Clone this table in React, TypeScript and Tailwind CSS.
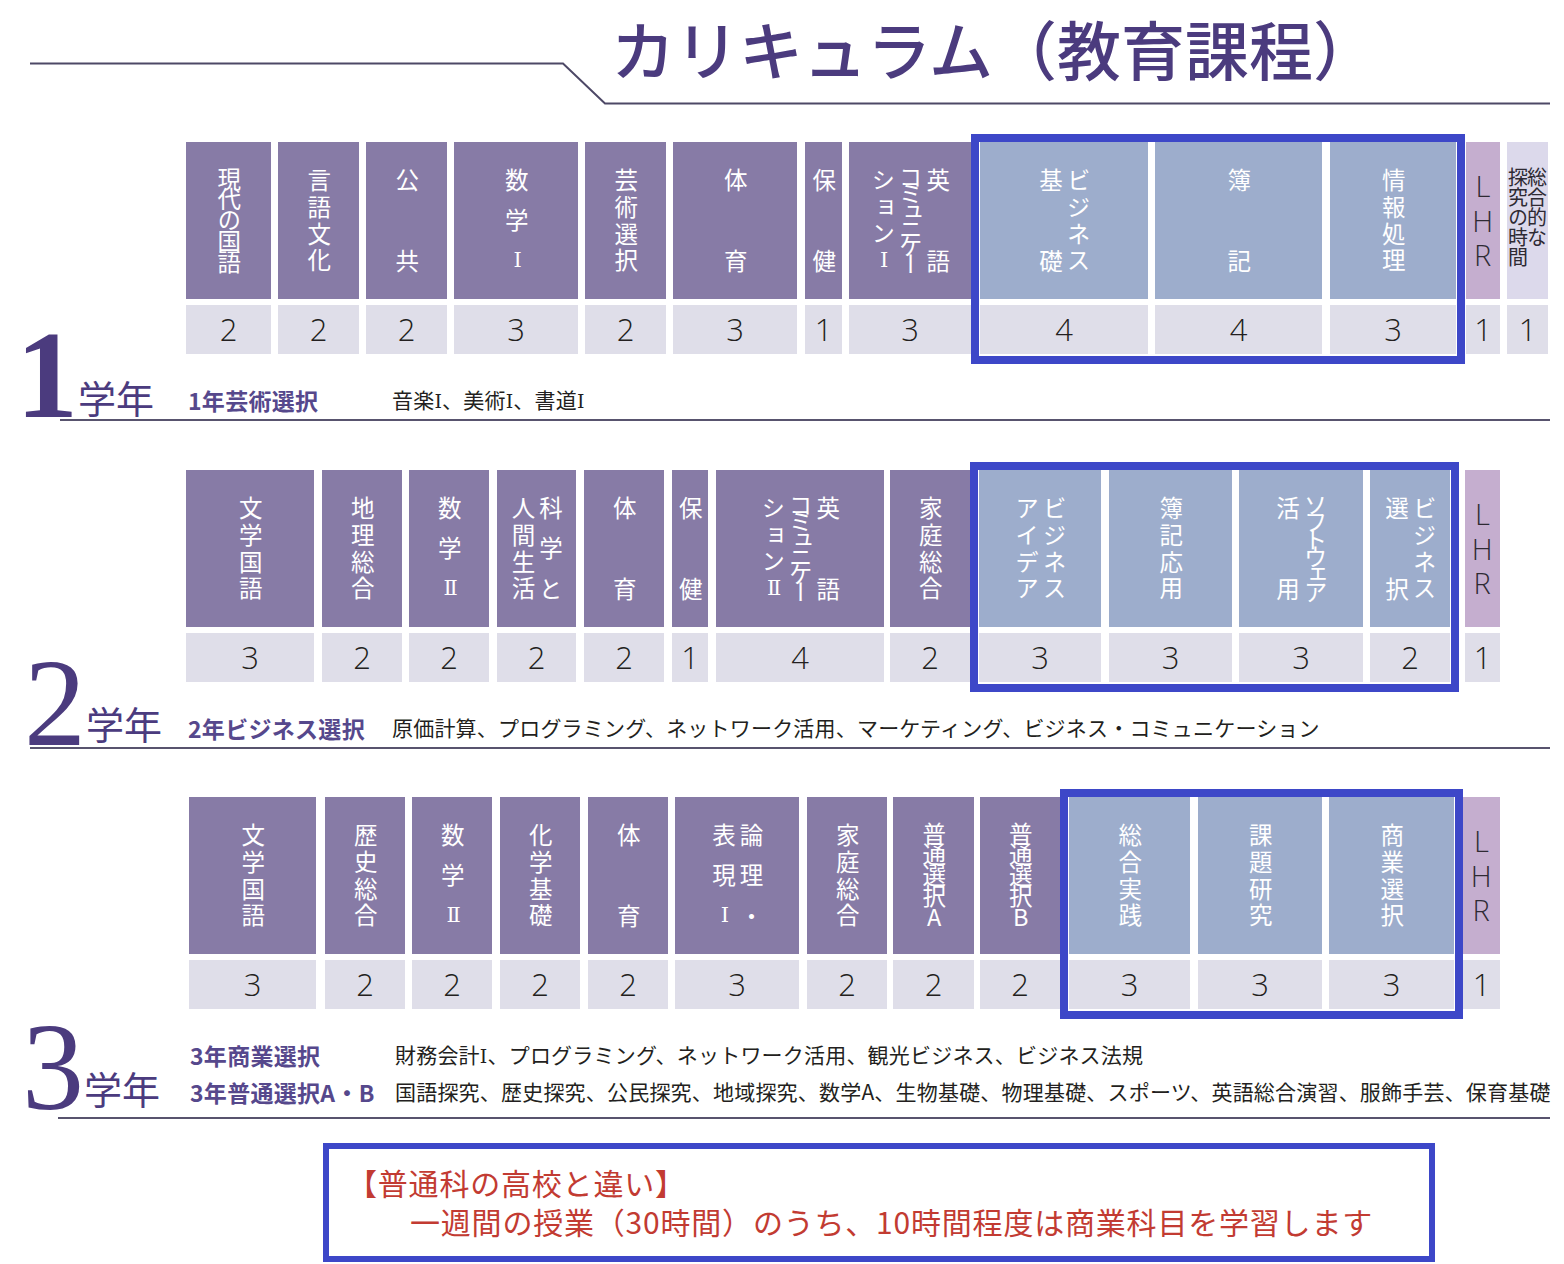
import React from 'react';

type Tone = 'purple' | 'blue' | 'lhr' | 'sogo';

interface Subject {
  cls: string;
  cols: string[];
  num: string;
  tone?: Tone;
}

interface Grade {
  before: Subject[];
  box: Subject[];
  after: Subject[];
}

const headTone: Record<Tone, string> = {
  purple: 'bg-[#877ba6] text-white',
  blue: 'bg-[#9dadcc] text-white',
  lhr: 'bg-[#c5aecf] text-[#2e2a33]',
  sogo: 'bg-[#dcd9eb] text-[#2e2a33]',
};

const grade1: Grade = {
  before: [
    { cls: 'w-[85px]', cols: ['現代の国語'], num: '2' },
    { cls: 'ml-[7px] w-[81px]', cols: ['言語文化'], num: '2' },
    { cls: 'ml-[7px] w-[81px]', cols: ['公共'], num: '2' },
    { cls: 'ml-[7px] w-[124px]', cols: ['数学Ⅰ'], num: '3' },
    { cls: 'ml-[7px] w-[81px]', cols: ['芸術選択'], num: '2' },
    { cls: 'ml-[7px] w-[124px]', cols: ['体育'], num: '3' },
    { cls: 'ml-[8px] w-[37px]', cols: ['保健'], num: '1' },
    { cls: 'ml-[7px] w-[122px]', cols: ['ションⅠ', 'コミュニケー', '英語'], num: '3' },
  ],
  box: [
    { cls: 'w-[168px]', cols: ['基礎', 'ビジネス'], num: '4', tone: 'blue' },
    { cls: 'ml-[7px] w-[167px]', cols: ['簿記'], num: '4', tone: 'blue' },
    { cls: 'ml-[8px] w-[126px]', cols: ['情報処理'], num: '3', tone: 'blue' },
  ],
  after: [
    { cls: 'ml-px w-[34px]', cols: ['LHR'], num: '1', tone: 'lhr' },
    { cls: 'ml-[7px] w-[41px]', cols: ['総合的な', '探究の時間'], num: '1', tone: 'sogo' },
  ],
};

const grade2: Grade = {
  before: [
    { cls: 'w-[128px]', cols: ['文学国語'], num: '3' },
    { cls: 'ml-[8px] w-[80px]', cols: ['地理総合'], num: '2' },
    { cls: 'ml-[7px] w-[80px]', cols: ['数学Ⅱ'], num: '2' },
    { cls: 'ml-[8px] w-[79px]', cols: ['人間生活', '科学と'], num: '2' },
    { cls: 'ml-[8px] w-[80px]', cols: ['体育'], num: '2' },
    { cls: 'ml-[8px] w-[36px]', cols: ['保健'], num: '1' },
    { cls: 'ml-[8px] w-[168px]', cols: ['ションⅡ', 'コミュニケー', '英語'], num: '4' },
    { cls: 'ml-[6px] w-[80px]', cols: ['家庭総合'], num: '2' },
  ],
  box: [
    { cls: 'w-[122px]', cols: ['アイデア', 'ビジネス'], num: '3', tone: 'blue' },
    { cls: 'ml-[8px] w-[123px]', cols: ['簿記応用'], num: '3', tone: 'blue' },
    { cls: 'ml-[7px] w-[124px]', cols: ['活用', 'ソフトウェア'], num: '3', tone: 'blue' },
    { cls: 'ml-[7px] w-[80px]', cols: ['選択', 'ビジネス'], num: '2', tone: 'blue' },
  ],
  after: [{ cls: 'ml-[6px] w-[35px]', cols: ['LHR'], num: '1', tone: 'lhr' }],
};

const grade3: Grade = {
  before: [
    { cls: 'w-[127px]', cols: ['文学国語'], num: '3' },
    { cls: 'ml-[9px] w-[80px]', cols: ['歴史総合'], num: '2' },
    { cls: 'ml-[7px] w-[80px]', cols: ['数学Ⅱ'], num: '2' },
    { cls: 'ml-[8px] w-[80px]', cols: ['化学基礎'], num: '2' },
    { cls: 'ml-[8px] w-[80px]', cols: ['体育'], num: '2' },
    { cls: 'ml-[7px] w-[124px]', cols: ['表現Ⅰ', '論理・'], num: '3' },
    { cls: 'ml-[8px] w-[80px]', cols: ['家庭総合'], num: '2' },
    { cls: 'ml-[6px] w-[81px]', cols: ['普通選択A'], num: '2' },
    { cls: 'ml-[6px] w-[80px]', cols: ['普通選択B'], num: '2' },
  ],
  box: [
    { cls: 'w-[121px]', cols: ['総合実践'], num: '3', tone: 'blue' },
    { cls: 'ml-[8px] w-[124px]', cols: ['課題研究'], num: '3', tone: 'blue' },
    { cls: 'ml-[7px] w-[125px]', cols: ['商業選択'], num: '3', tone: 'blue' },
  ],
  after: [{ cls: 'w-[37px]', cols: ['LHR'], num: '1', tone: 'lhr' }],
};

const isRoman = (ch: string) => ch === 'Ⅰ' || ch === 'Ⅱ';

// roman numerals are set in a serif face, like the printed sheet
const R = ({ children }: { children: React.ReactNode }) => (
  <span className="font-['DejaVu_Serif',serif] text-[0.9em]">{children}</span>
);

// vertical text: each column spreads its characters top to bottom
const VText = ({ cols, latin }: { cols: string[]; latin?: boolean }) => (
  <div className="flex h-full justify-center gap-[4px] pt-[26px]">
    {cols.map((col, i) => (
      <div key={i} className="flex h-[104px] flex-col justify-between">
        {Array.from(col).map((ch, j) => (
          <span
            key={j}
            className={`flex min-h-0 shrink justify-center leading-none [text-orientation:upright] [writing-mode:vertical-rl] ${
              latin
                ? "font-['Open_Sans',sans-serif] text-[29px] font-light"
                : isRoman(ch)
                  ? "font-['DejaVu_Serif',serif] text-[21px]"
                  : 'text-[23.5px]'
            }`}
          >
            {ch}
          </span>
        ))}
      </div>
    ))}
  </div>
);

const Column = ({ s }: { s: Subject }) => {
  const tone = s.tone ?? 'purple';
  return (
    <div className={`flex shrink-0 flex-col ${s.cls}`}>
      <div className={`h-[157px] ${headTone[tone]}`}>
        {tone === 'sogo' ? (
          <div className="flex justify-center pt-[25px]">
            <div className="text-[20px] leading-[19px] [writing-mode:vertical-rl]">
              {s.cols[0]}
              <br />
              {s.cols[1]}
            </div>
          </div>
        ) : (
          <VText cols={s.cols} latin={tone === 'lhr'} />
        )}
      </div>
      <div className="mt-[6px] flex h-[49px] items-center justify-center bg-[#dfdee9] font-['Open_Sans',sans-serif] text-[31px] font-light text-[#231f20]">
        {s.num}
      </div>
    </div>
  );
};

const GradeRow = ({ g }: { g: Grade }) => (
  <div className="flex items-start">
    {g.before.map((s, i) => (
      <Column key={i} s={s} />
    ))}
    <div className="-mt-[8px] -mb-[10px] flex shrink-0 border-[8px] border-[#3d47c8] px-px pb-[2px]">
      {g.box.map((s, i) => (
        <Column key={i} s={s} />
      ))}
    </div>
    {g.after.map((s, i) => (
      <Column key={i} s={s} />
    ))}
  </div>
);

const YearLabel = ({ n, numCls }: { n: string; numCls: string }) => (
  <div className="flex items-end font-['Liberation_Serif','Noto_Sans_CJK_JP',serif] text-[#4b3b7e]">
    <span className={`text-[124px] leading-none ${numCls}`}>{n}</span>
    <span className="text-[38px] leading-none">学年</span>
  </div>
);

const Rule = ({ cls }: { cls: string }) => <div className={`mr-[14px] h-[2px] bg-[#58536e] ${cls}`} />;

const label = 'text-[23px] font-bold tracking-[0.3px] text-[#56488c]';
const body = 'whitespace-nowrap text-[21px] tracking-[0.2px]';

export default function App() {
  return (
    <div className="w-[1564px] bg-white pb-[2px] font-['Noto_Sans_CJK_JP',sans-serif] text-[#231f20]">
      {/* Title */}
      <div className="relative h-[142px]">
        <svg className="absolute left-0 top-0" width="1564" height="142" viewBox="0 0 1564 142">
          <path d="M30 63.5H563L605 103.5H1550" fill="none" stroke="#4d4866" strokeWidth="2" />
        </svg>
        <h1 className="relative pl-[611px] pt-[15px] text-[64px] font-medium leading-none text-[#4b3b7e]">
          カリキュラム（教育課程）
        </h1>
      </div>

      {/* 1学年 */}
      <div className="ml-[28px] flex">
        <div className="flex w-[158px] shrink-0 items-end">
          <YearLabel n="1" numCls="-mb-[19px] -ml-[12px] font-bold" />
        </div>
        <div>
          <GradeRow g={grade1} />
          <div className="mt-[34px] flex h-[24px] items-center">
            <span className={`ml-[2px] w-[204px] ${label}`}>1年芸術選択</span>
            <span className={body}>
              音楽<R>Ⅰ</R>、美術<R>Ⅰ</R>、書道<R>Ⅰ</R>
            </span>
          </div>
          <div className="h-[7px]" />
        </div>
      </div>
      <Rule cls="ml-[60px]" />

      {/* 2学年 */}
      <div className="ml-[28px] mt-[49px] flex">
        <div className="flex w-[158px] shrink-0 items-end pb-[2px]">
          <YearLabel n="2" numCls="-mb-[21px] -ml-[4px]" />
        </div>
        <div>
          <GradeRow g={grade2} />
          <div className="mt-[34px] flex h-[24px] items-center">
            <span className={`ml-[2px] w-[204px] ${label}`}>2年ビジネス選択</span>
            <span className={body}>
              原価計算、プログラミング、ネットワーク活用、マーケティング、ビジネス・コミュニケーション
            </span>
          </div>
          <div className="h-[7px]" />
        </div>
      </div>
      <Rule cls="ml-[30px]" />

      {/* 3学年 */}
      <div className="ml-[28px] mt-[48px] flex">
        <div className="flex w-[158px] shrink-0 items-end pb-[7px]">
          <YearLabel n="3" numCls="-mb-[20px] -ml-[6px]" />
        </div>
        <div className="ml-[3px]">
          <GradeRow g={grade3} />
          <div className="mt-[34px] flex h-[24px] items-center">
            <span className={`ml-px w-[205px] ${label}`}>3年商業選択</span>
            <span className={body}>
              財務会計<R>Ⅰ</R>、プログラミング、ネットワーク活用、観光ビジネス、ビジネス法規
            </span>
          </div>
          <div className="mt-[13px] flex h-[24px] items-center">
            <span className={`ml-px w-[205px] ${label}`}>3年普通選択A・B</span>
            <span className={body}>
              国語探究、歴史探究、公民探究、地域探究、数学A、生物基礎、物理基礎、スポーツ、英語総合演習、服飾手芸、保育基礎
            </span>
          </div>
          <div className="h-[13px]" />
        </div>
      </div>
      <Rule cls="ml-[58px]" />

      {/* note */}
      <div className="ml-[323px] mt-[24px] h-[119px] w-[1112px] border-[6px] border-[#3d47c8] pl-[18px] pt-[14px] text-[30px] leading-[39px] tracking-[0.8px] text-[#c23b32]">
        <p>【普通科の高校と違い】</p>
        <p className="pl-[63px]">一週間の授業（30時間）のうち、10時間程度は商業科目を学習します</p>
      </div>
    </div>
  );
}
